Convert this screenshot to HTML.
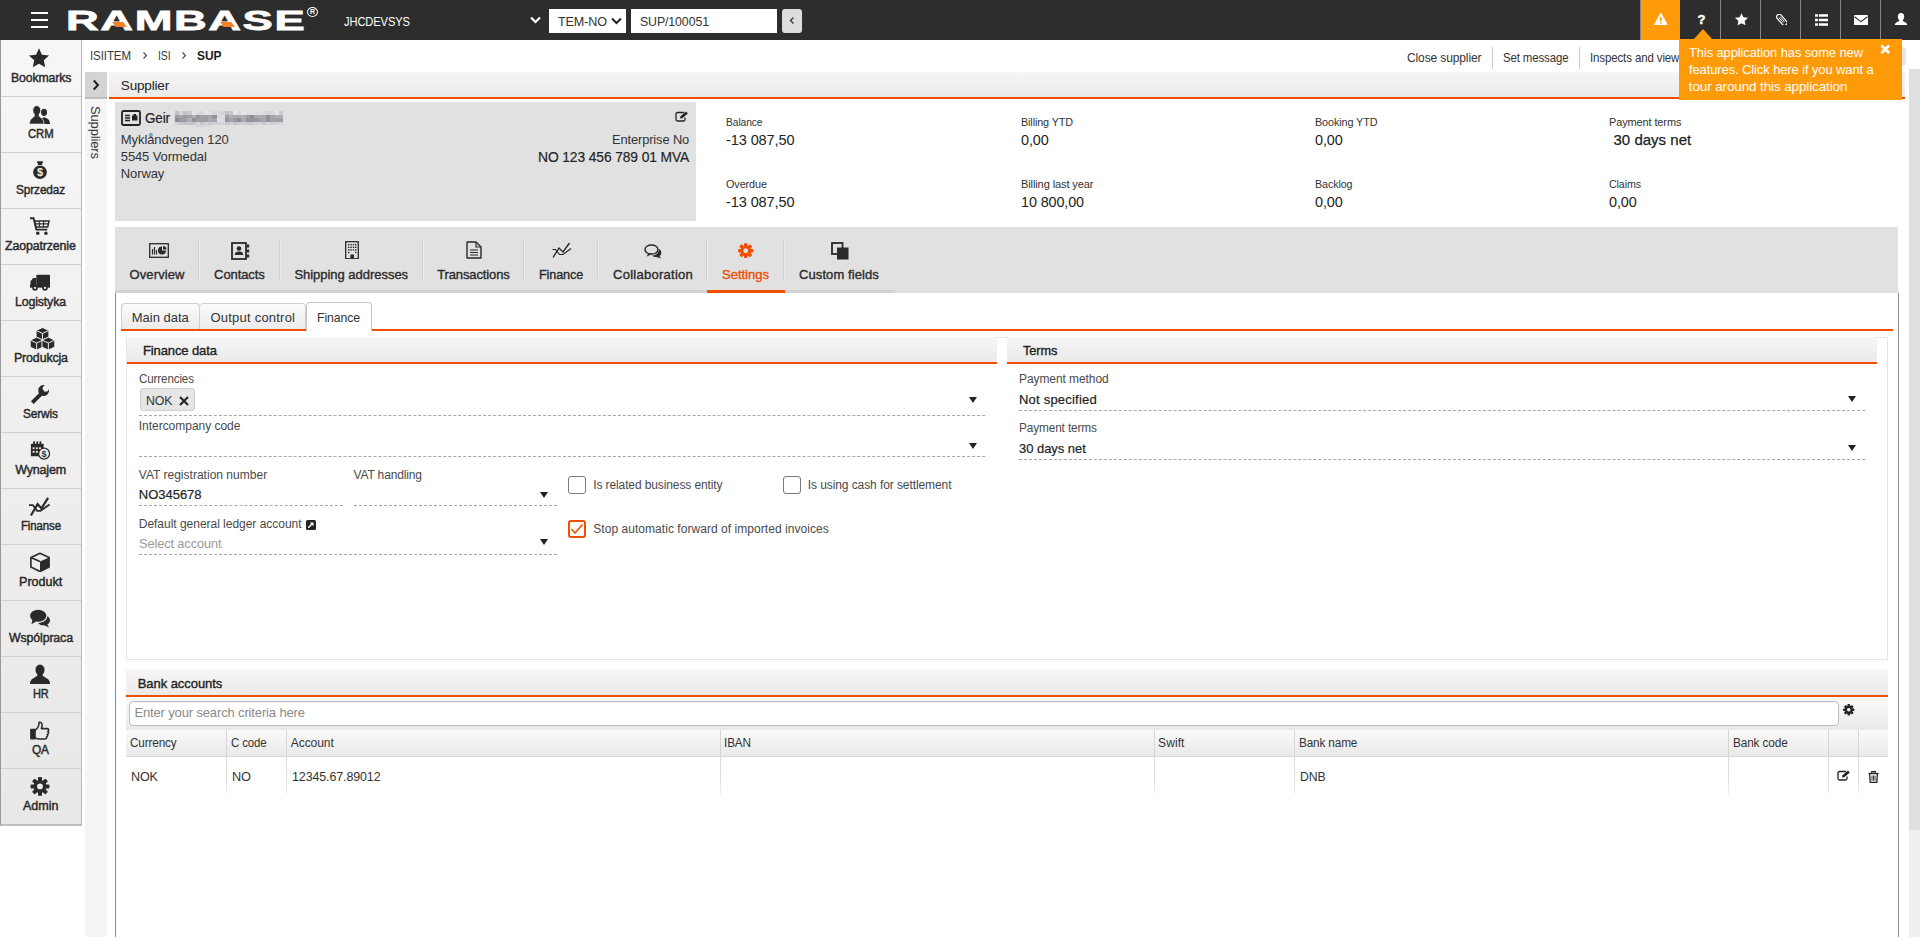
<!DOCTYPE html>
<html><head><meta charset="utf-8"><title>RamBase - Supplier</title>
<style>
*{box-sizing:border-box;margin:0;padding:0}
html,body{width:1920px;height:937px;overflow:hidden;background:#fff}
body{font-family:"Liberation Sans",sans-serif;font-size:13px;color:#222;position:relative}
.abs{position:absolute}
.t{position:absolute;white-space:nowrap;line-height:1}
#top{left:0;top:0;width:1920px;height:40px;background:#2d2d2d}
#side{left:0;top:40px;width:82px;height:786px;background:linear-gradient(#f7f6f6,#e9e8e6);border-left:1px solid #999;border-right:1px solid #b8b8b8;border-bottom:2px solid #bdbdbd}
.hdr{background:linear-gradient(#f7f5f6,#ebeae9);border-bottom:2px solid #f04e00}
.dash{position:absolute;height:0;border-top:1px dashed #a8a8a8}
</style></head><body>
<div class="t" id="t1" style="left:90.17px;top:48.57px;font-size:13.5px;letter-spacing:-0.120px;transform-origin:0 0;transform:scaleX(0.8536);color:#3a3a3a;">ISIITEM</div>
<svg class="abs" style="left:142px;top:51px" width="6" height="9" viewBox="0 0 6 9"><path d="M1.5 1.5 L4.5 4.5 L1.5 7.5" fill="none" stroke="#444" stroke-width="1.1"/></svg>
<div class="t" id="t2" style="left:157.81px;top:48.57px;font-size:13.5px;letter-spacing:-0.120px;transform-origin:0 0;transform:scaleX(0.7746);color:#3a3a3a;">ISI</div>
<svg class="abs" style="left:181px;top:51px" width="6" height="9" viewBox="0 0 6 9"><path d="M1.5 1.5 L4.5 4.5 L1.5 7.5" fill="none" stroke="#444" stroke-width="1.1"/></svg>
<div class="t" id="t3" style="left:196.56px;top:48.57px;font-size:13.5px;letter-spacing:-0.120px;transform-origin:0 0;transform:scaleX(0.8866);font-weight:bold;color:#1a1a1a;">SUP</div>
<div class="t" id="t4" style="left:1407.24px;top:50.90px;font-size:13px;letter-spacing:-0.120px;transform-origin:0 0;transform:scaleX(0.9218);color:#333;">Close supplier</div>
<div class="abs" style="left:1492px;top:47px;width:1px;height:22px;background:#ccc"></div>
<div class="t" id="t5" style="left:1502.96px;top:50.90px;font-size:13px;letter-spacing:-0.120px;transform-origin:0 0;transform:scaleX(0.8771);color:#333;">Set message</div>
<div class="abs" style="left:1579px;top:47px;width:1px;height:22px;background:#ccc"></div>
<div class="t" id="t6" style="left:1590.26px;top:50.90px;font-size:13px;letter-spacing:-0.120px;transform-origin:0 0;transform:scaleX(0.8813);color:#333;">Inspects and views</div>
<div class="abs" style="left:1880px;top:47px;width:26px;height:19px;background:#e4e6e8;border-radius:4px"></div>
<div class="abs" style="left:85px;top:72px;width:22px;height:865px;background:#f5f5f5"></div>
<div class="abs" style="left:85px;top:72px;width:22px;height:27px;background:#d4d4d4;border-bottom:2px solid #bebebe"></div>
<svg class="abs" style="left:92px;top:79px" width="8" height="12" viewBox="0 0 8 12"><path d="M1.8 1.5 L6 6 L1.8 10.5" fill="none" stroke="#222" stroke-width="2"/></svg>
<div class="t" id="sup_v" style="left:101.5px;top:106px;font-size:13px;color:#333;transform-origin:0 0;transform:rotate(90deg);letter-spacing:-0.15px">Suppliers</div>
<div class="abs hdr" style="left:109px;top:72px;width:1796px;height:27px;"></div>
<div class="t" id="t7" style="left:120.80px;top:78.57px;font-size:13.5px;letter-spacing:-0.162px;">Supplier</div>
<div class="abs" style="left:115px;top:102px;width:581px;height:119px;background:#e1e1e1"></div>
<svg class="abs" style="left:121px;top:110px" width="20" height="16" viewBox="0 0 20 16"><rect x="1" y="1" width="18" height="14" rx="1.5" fill="none" stroke="#222" stroke-width="1.8"/><path d="M4 5.5 L9 5.5 M4 8 L9 8 M4 10.5 L9 10.5" stroke="#222" stroke-width="1.4"/><rect x="11" y="5.5" width="5.5" height="5" fill="#222"/><rect x="12.5" y="4" width="2.5" height="2" fill="#222"/></svg>
<div class="t" id="t8" style="left:144.94px;top:110.53px;font-size:14.5px;letter-spacing:-0.120px;transform-origin:0 0;transform:scaleX(0.9248);-webkit-text-stroke:0.2px #222;">Geir</div>
<div class="abs" style="left:175px;top:111.2px;width:4.25px;height:3.7px;background:#c0c1c6"></div>
<div class="abs" style="left:175px;top:114.8px;width:4.25px;height:3.7px;background:#a0a1a6"></div>
<div class="abs" style="left:175px;top:118.4px;width:4.25px;height:3.5px;background:#8b8c91"></div>
<div class="abs" style="left:175px;top:121.8px;width:4.25px;height:3.3px;background:#d4d5da"></div>
<div class="abs" style="left:179.15px;top:111.2px;width:4.25px;height:3.7px;background:#d5d6db"></div>
<div class="abs" style="left:179.15px;top:114.8px;width:4.25px;height:3.7px;background:#a7a8ad"></div>
<div class="abs" style="left:179.15px;top:118.4px;width:4.25px;height:3.5px;background:#9a9ba0"></div>
<div class="abs" style="left:179.15px;top:121.8px;width:4.25px;height:3.3px;background:#c5c6cb"></div>
<div class="abs" style="left:183.3px;top:111.2px;width:4.25px;height:3.7px;background:#c3c4c9"></div>
<div class="abs" style="left:183.3px;top:114.8px;width:4.25px;height:3.7px;background:#97989d"></div>
<div class="abs" style="left:183.3px;top:118.4px;width:4.25px;height:3.5px;background:#9e9fa4"></div>
<div class="abs" style="left:183.3px;top:121.8px;width:4.25px;height:3.3px;background:#c4c5ca"></div>
<div class="abs" style="left:187.45px;top:111.2px;width:4.25px;height:3.7px;background:#c8c9ce"></div>
<div class="abs" style="left:187.45px;top:114.8px;width:4.25px;height:3.7px;background:#9fa0a5"></div>
<div class="abs" style="left:187.45px;top:118.4px;width:4.25px;height:3.5px;background:#b0b1b6"></div>
<div class="abs" style="left:187.45px;top:121.8px;width:4.25px;height:3.3px;background:#c4c5ca"></div>
<div class="abs" style="left:191.6px;top:111.2px;width:4.25px;height:3.7px;background:#e4e5e8"></div>
<div class="abs" style="left:191.6px;top:114.8px;width:4.25px;height:3.7px;background:#aeafb4"></div>
<div class="abs" style="left:191.6px;top:118.4px;width:4.25px;height:3.5px;background:#919297"></div>
<div class="abs" style="left:191.6px;top:121.8px;width:4.25px;height:3.3px;background:#c7c8cd"></div>
<div class="abs" style="left:195.75px;top:111.2px;width:4.25px;height:3.7px;background:#dbdce1"></div>
<div class="abs" style="left:195.75px;top:114.8px;width:4.25px;height:3.7px;background:#97989d"></div>
<div class="abs" style="left:195.75px;top:118.4px;width:4.25px;height:3.5px;background:#9fa0a5"></div>
<div class="abs" style="left:195.75px;top:121.8px;width:4.25px;height:3.3px;background:#d4d5da"></div>
<div class="abs" style="left:195.75px;top:125px;width:4.25px;height:2px;background:#d6d6d9"></div>
<div class="abs" style="left:199.9px;top:111.2px;width:4.25px;height:3.7px;background:#d7d8dd"></div>
<div class="abs" style="left:199.9px;top:114.8px;width:4.25px;height:3.7px;background:#9fa0a5"></div>
<div class="abs" style="left:199.9px;top:118.4px;width:4.25px;height:3.5px;background:#9e9fa4"></div>
<div class="abs" style="left:199.9px;top:121.8px;width:4.25px;height:3.3px;background:#c6c7cc"></div>
<div class="abs" style="left:199.9px;top:125px;width:4.25px;height:2px;background:#d6d6d9"></div>
<div class="abs" style="left:204.05px;top:111.2px;width:4.25px;height:3.7px;background:#e3e4e8"></div>
<div class="abs" style="left:204.05px;top:114.8px;width:4.25px;height:3.7px;background:#9e9fa4"></div>
<div class="abs" style="left:204.05px;top:118.4px;width:4.25px;height:3.5px;background:#9d9ea3"></div>
<div class="abs" style="left:204.05px;top:121.8px;width:4.25px;height:3.3px;background:#d4d5da"></div>
<div class="abs" style="left:204.05px;top:125px;width:4.25px;height:2px;background:#d6d6d9"></div>
<div class="abs" style="left:208.2px;top:111.2px;width:4.25px;height:3.7px;background:#dfe0e5"></div>
<div class="abs" style="left:208.2px;top:114.8px;width:4.25px;height:3.7px;background:#a6a7ac"></div>
<div class="abs" style="left:208.2px;top:118.4px;width:4.25px;height:3.5px;background:#aaabb0"></div>
<div class="abs" style="left:208.2px;top:121.8px;width:4.25px;height:3.3px;background:#cacbd0"></div>
<div class="abs" style="left:208.2px;top:125px;width:4.25px;height:2px;background:#d6d6d9"></div>
<div class="abs" style="left:212.35px;top:111.2px;width:4.25px;height:3.7px;background:#d7d8dd"></div>
<div class="abs" style="left:212.35px;top:114.8px;width:4.25px;height:3.7px;background:#919297"></div>
<div class="abs" style="left:212.35px;top:118.4px;width:4.25px;height:3.5px;background:#a5a6ab"></div>
<div class="abs" style="left:212.35px;top:121.8px;width:4.25px;height:3.3px;background:#cdced3"></div>
<div class="abs" style="left:216.5px;top:111.2px;width:4.25px;height:3.7px;background:#dcdde2"></div>
<div class="abs" style="left:216.5px;top:114.8px;width:4.25px;height:3.7px;background:#d7d8dd"></div>
<div class="abs" style="left:216.5px;top:118.4px;width:4.25px;height:3.5px;background:#e1e2e7"></div>
<div class="abs" style="left:216.5px;top:121.8px;width:4.25px;height:3.3px;background:#d0d1d6"></div>
<div class="abs" style="left:220.65px;top:111.2px;width:4.25px;height:3.7px;background:#d1d2d7"></div>
<div class="abs" style="left:220.65px;top:114.8px;width:4.25px;height:3.7px;background:#dedfe4"></div>
<div class="abs" style="left:220.65px;top:118.4px;width:4.25px;height:3.5px;background:#dbdce1"></div>
<div class="abs" style="left:220.65px;top:121.8px;width:4.25px;height:3.3px;background:#d3d4d9"></div>
<div class="abs" style="left:224.8px;top:111.2px;width:4.25px;height:3.7px;background:#c0c1c6"></div>
<div class="abs" style="left:224.8px;top:114.8px;width:4.25px;height:3.7px;background:#a0a1a6"></div>
<div class="abs" style="left:224.8px;top:118.4px;width:4.25px;height:3.5px;background:#97989d"></div>
<div class="abs" style="left:224.8px;top:121.8px;width:4.25px;height:3.3px;background:#c5c6cb"></div>
<div class="abs" style="left:228.95px;top:111.2px;width:4.25px;height:3.7px;background:#c7c8cd"></div>
<div class="abs" style="left:228.95px;top:114.8px;width:4.25px;height:3.7px;background:#aeafb4"></div>
<div class="abs" style="left:228.95px;top:118.4px;width:4.25px;height:3.5px;background:#a6a7ac"></div>
<div class="abs" style="left:228.95px;top:121.8px;width:4.25px;height:3.3px;background:#cecfd4"></div>
<div class="abs" style="left:233.1px;top:111.2px;width:4.25px;height:3.7px;background:#e4e5e8"></div>
<div class="abs" style="left:233.1px;top:114.8px;width:4.25px;height:3.7px;background:#abacb1"></div>
<div class="abs" style="left:233.1px;top:118.4px;width:4.25px;height:3.5px;background:#98999e"></div>
<div class="abs" style="left:233.1px;top:121.8px;width:4.25px;height:3.3px;background:#c5c6cb"></div>
<div class="abs" style="left:237.25px;top:111.2px;width:4.25px;height:3.7px;background:#dadbe0"></div>
<div class="abs" style="left:237.25px;top:114.8px;width:4.25px;height:3.7px;background:#abacb1"></div>
<div class="abs" style="left:237.25px;top:118.4px;width:4.25px;height:3.5px;background:#8c8d92"></div>
<div class="abs" style="left:237.25px;top:121.8px;width:4.25px;height:3.3px;background:#cccdd2"></div>
<div class="abs" style="left:241.4px;top:111.2px;width:4.25px;height:3.7px;background:#e4e5e8"></div>
<div class="abs" style="left:241.4px;top:114.8px;width:4.25px;height:3.7px;background:#aeafb4"></div>
<div class="abs" style="left:241.4px;top:118.4px;width:4.25px;height:3.5px;background:#aaabb0"></div>
<div class="abs" style="left:241.4px;top:121.8px;width:4.25px;height:3.3px;background:#cfd0d5"></div>
<div class="abs" style="left:245.55px;top:111.2px;width:4.25px;height:3.7px;background:#dddee3"></div>
<div class="abs" style="left:245.55px;top:114.8px;width:4.25px;height:3.7px;background:#9c9da2"></div>
<div class="abs" style="left:245.55px;top:118.4px;width:4.25px;height:3.5px;background:#95969b"></div>
<div class="abs" style="left:245.55px;top:121.8px;width:4.25px;height:3.3px;background:#c6c7cc"></div>
<div class="abs" style="left:249.7px;top:111.2px;width:4.25px;height:3.7px;background:#e1e2e7"></div>
<div class="abs" style="left:249.7px;top:114.8px;width:4.25px;height:3.7px;background:#8b8c91"></div>
<div class="abs" style="left:249.7px;top:118.4px;width:4.25px;height:3.5px;background:#939499"></div>
<div class="abs" style="left:249.7px;top:121.8px;width:4.25px;height:3.3px;background:#cacbd0"></div>
<div class="abs" style="left:253.85px;top:111.2px;width:4.25px;height:3.7px;background:#dedfe4"></div>
<div class="abs" style="left:253.85px;top:114.8px;width:4.25px;height:3.7px;background:#a8a9ae"></div>
<div class="abs" style="left:253.85px;top:118.4px;width:4.25px;height:3.5px;background:#999a9f"></div>
<div class="abs" style="left:253.85px;top:121.8px;width:4.25px;height:3.3px;background:#d1d2d7"></div>
<div class="abs" style="left:258px;top:111.2px;width:4.25px;height:3.7px;background:#dedfe4"></div>
<div class="abs" style="left:258px;top:114.8px;width:4.25px;height:3.7px;background:#adaeb3"></div>
<div class="abs" style="left:258px;top:118.4px;width:4.25px;height:3.5px;background:#a0a1a6"></div>
<div class="abs" style="left:258px;top:121.8px;width:4.25px;height:3.3px;background:#d4d5da"></div>
<div class="abs" style="left:262.15px;top:111.2px;width:4.25px;height:3.7px;background:#dadbe0"></div>
<div class="abs" style="left:262.15px;top:114.8px;width:4.25px;height:3.7px;background:#a9aaaf"></div>
<div class="abs" style="left:262.15px;top:118.4px;width:4.25px;height:3.5px;background:#a8a9ae"></div>
<div class="abs" style="left:262.15px;top:121.8px;width:4.25px;height:3.3px;background:#c7c8cd"></div>
<div class="abs" style="left:266.3px;top:111.2px;width:4.25px;height:3.7px;background:#d4d5da"></div>
<div class="abs" style="left:266.3px;top:114.8px;width:4.25px;height:3.7px;background:#8f9095"></div>
<div class="abs" style="left:266.3px;top:118.4px;width:4.25px;height:3.5px;background:#919297"></div>
<div class="abs" style="left:266.3px;top:121.8px;width:4.25px;height:3.3px;background:#d5d6db"></div>
<div class="abs" style="left:270.45px;top:111.2px;width:4.25px;height:3.7px;background:#d7d8dd"></div>
<div class="abs" style="left:270.45px;top:114.8px;width:4.25px;height:3.7px;background:#a4a5aa"></div>
<div class="abs" style="left:270.45px;top:118.4px;width:4.25px;height:3.5px;background:#a0a1a6"></div>
<div class="abs" style="left:270.45px;top:121.8px;width:4.25px;height:3.3px;background:#cecfd4"></div>
<div class="abs" style="left:274.6px;top:111.2px;width:4.25px;height:3.7px;background:#e4e5e8"></div>
<div class="abs" style="left:274.6px;top:114.8px;width:4.25px;height:3.7px;background:#aeafb4"></div>
<div class="abs" style="left:274.6px;top:118.4px;width:4.25px;height:3.5px;background:#a0a1a6"></div>
<div class="abs" style="left:274.6px;top:121.8px;width:4.25px;height:3.3px;background:#d3d4d9"></div>
<div class="abs" style="left:278.75px;top:111.2px;width:4.25px;height:3.7px;background:#c9cacf"></div>
<div class="abs" style="left:278.75px;top:114.8px;width:4.25px;height:3.7px;background:#b0b1b6"></div>
<div class="abs" style="left:278.75px;top:118.4px;width:4.25px;height:3.5px;background:#9d9ea3"></div>
<div class="abs" style="left:278.75px;top:121.8px;width:4.25px;height:3.3px;background:#d4d5da"></div>
<span class="t" style="left:175px;top:108px;font-size:13px;color:transparent">supplier name</span>
<div class="t" id="t9" style="left:120.80px;top:133.20px;font-size:13px;letter-spacing:-0.075px;color:#333;">Myklåndvegen 120</div>
<div class="t" id="t10" style="left:120.80px;top:149.90px;font-size:13px;letter-spacing:-0.121px;color:#333;">5545 Vormedal</div>
<div class="t" id="t11" style="left:120.80px;top:166.60px;font-size:13px;letter-spacing:-0.113px;color:#333;">Norway</div>
<svg class="abs" style="left:674.5px;top:111px" width="14" height="11" viewBox="0 0 14 11"><path d="M9 1.5 L2.5 1.5 A1.5 1.5 0 0 0 1 3 L1 8.5 A1.5 1.5 0 0 0 2.5 10 L8.5 10 A1.5 1.5 0 0 0 10 8.5 L10 6.5" fill="none" stroke="#222" stroke-width="1.3"/><path d="M5 7.5 L5.5 5.2 L11 0.6 L12.8 2.6 L7.3 7.2 Z" fill="#222"/></svg>
<div class="t" id="t12" style="left:612.31px;top:133.20px;font-size:13px;letter-spacing:-0.120px;transform-origin:0 0;transform:scaleX(0.9892);color:#333;">Enterprise No</div>
<div class="t" id="t13" style="left:538.21px;top:149.85px;font-size:14px;letter-spacing:-0.120px;transform-origin:0 0;transform:scaleX(0.9889);-webkit-text-stroke:0.15px #222;">NO 123 456 789 01 MVA</div>
<div class="t" id="t14" style="left:726.25px;top:116.57px;font-size:11.5px;letter-spacing:-0.120px;transform-origin:0 0;transform:scaleX(0.8962);color:#333;">Balance</div>
<div class="t" id="t15" style="left:726.21px;top:131.60px;font-size:15px;letter-spacing:-0.120px;transform-origin:0 0;transform:scaleX(0.9710);">-13 087,50</div>
<div class="t" id="t16" style="left:726.23px;top:179.27px;font-size:11.5px;letter-spacing:-0.120px;transform-origin:0 0;transform:scaleX(0.9449);color:#333;">Overdue</div>
<div class="t" id="t17" style="left:726.21px;top:194.10px;font-size:15px;letter-spacing:-0.120px;transform-origin:0 0;transform:scaleX(0.9710);">-13 087,50</div>
<div class="t" id="t18" style="left:1020.78px;top:116.57px;font-size:11.5px;letter-spacing:-0.120px;transform-origin:0 0;transform:scaleX(0.9374);color:#333;">Billing YTD</div>
<div class="t" id="t19" style="left:1020.77px;top:131.60px;font-size:15px;letter-spacing:-0.120px;transform-origin:0 0;transform:scaleX(0.9606);">0,00</div>
<div class="t" id="t20" style="left:1020.77px;top:179.27px;font-size:11.5px;letter-spacing:-0.120px;transform-origin:0 0;transform:scaleX(0.9613);color:#333;">Billing last year</div>
<div class="t" id="t21" style="left:1020.77px;top:194.10px;font-size:15px;letter-spacing:-0.120px;transform-origin:0 0;transform:scaleX(0.9578);">10 800,00</div>
<div class="t" id="t22" style="left:1315.13px;top:116.57px;font-size:11.5px;letter-spacing:-0.120px;transform-origin:0 0;transform:scaleX(0.9420);color:#333;">Booking YTD</div>
<div class="t" id="t23" style="left:1315.12px;top:131.60px;font-size:15px;letter-spacing:-0.120px;transform-origin:0 0;transform:scaleX(0.9606);">0,00</div>
<div class="t" id="t24" style="left:1315.13px;top:179.27px;font-size:11.5px;letter-spacing:-0.120px;transform-origin:0 0;transform:scaleX(0.9330);color:#333;">Backlog</div>
<div class="t" id="t25" style="left:1315.12px;top:194.10px;font-size:15px;letter-spacing:-0.120px;transform-origin:0 0;transform:scaleX(0.9606);">0,00</div>
<div class="t" id="t26" style="left:1609.02px;top:116.57px;font-size:11.5px;letter-spacing:-0.120px;transform-origin:0 0;transform:scaleX(0.9540);color:#333;">Payment terms</div>
<div class="t" id="t27" style="left:1613.50px;top:131.60px;font-size:15px;letter-spacing:0.014px;-webkit-text-stroke:0.25px #222;">30 days net</div>
<div class="t" id="t28" style="left:1609.04px;top:179.27px;font-size:11.5px;letter-spacing:-0.120px;transform-origin:0 0;transform:scaleX(0.9264);color:#333;">Claims</div>
<div class="t" id="t29" style="left:1609.02px;top:194.10px;font-size:15px;letter-spacing:-0.120px;transform-origin:0 0;transform:scaleX(0.9606);">0,00</div>
<div class="abs" style="left:115px;top:227px;width:1783px;height:66px;background:#e1e1e1"></div>
<div class="abs" style="left:115px;top:290px;width:780px;height:3px;background:#d2d2d2"></div>
<div class="abs" style="left:707px;top:290px;width:78px;height:3px;background:#f04e00"></div>
<div class="abs" style="left:198px;top:239px;width:1px;height:40px;background:#d0d0d0"></div>
<div class="abs" style="left:199px;top:239px;width:1px;height:40px;background:#ececec"></div>
<div class="abs" style="left:279px;top:239px;width:1px;height:40px;background:#d0d0d0"></div>
<div class="abs" style="left:280px;top:239px;width:1px;height:40px;background:#ececec"></div>
<div class="abs" style="left:422px;top:239px;width:1px;height:40px;background:#d0d0d0"></div>
<div class="abs" style="left:423px;top:239px;width:1px;height:40px;background:#ececec"></div>
<div class="abs" style="left:523px;top:239px;width:1px;height:40px;background:#d0d0d0"></div>
<div class="abs" style="left:524px;top:239px;width:1px;height:40px;background:#ececec"></div>
<div class="abs" style="left:597px;top:239px;width:1px;height:40px;background:#d0d0d0"></div>
<div class="abs" style="left:598px;top:239px;width:1px;height:40px;background:#ececec"></div>
<div class="abs" style="left:706px;top:239px;width:1px;height:40px;background:#d0d0d0"></div>
<div class="abs" style="left:707px;top:239px;width:1px;height:40px;background:#ececec"></div>
<div class="abs" style="left:783px;top:239px;width:1px;height:40px;background:#d0d0d0"></div>
<div class="abs" style="left:784px;top:239px;width:1px;height:40px;background:#ececec"></div>
<div class="t" id="t30" style="left:129.50px;top:267.60px;font-size:13px;letter-spacing:0.117px;-webkit-text-stroke:0.35px #2a2a2a;color:#2a2a2a;">Overview</div>
<div class="t" id="t31" style="left:214.10px;top:267.60px;font-size:13px;letter-spacing:-0.086px;-webkit-text-stroke:0.35px #2a2a2a;color:#2a2a2a;">Contacts</div>
<div class="t" id="t32" style="left:294.40px;top:267.60px;font-size:13px;letter-spacing:-0.029px;-webkit-text-stroke:0.35px #2a2a2a;color:#2a2a2a;">Shipping addresses</div>
<div class="t" id="t33" style="left:437.20px;top:267.60px;font-size:13px;letter-spacing:-0.122px;-webkit-text-stroke:0.35px #2a2a2a;color:#2a2a2a;">Transactions</div>
<div class="t" id="t34" style="left:539.21px;top:267.60px;font-size:13px;letter-spacing:-0.120px;transform-origin:0 0;transform:scaleX(0.9708);-webkit-text-stroke:0.35px #2a2a2a;color:#2a2a2a;">Finance</div>
<div class="t" id="t35" style="left:613.10px;top:267.60px;font-size:13px;letter-spacing:0.258px;-webkit-text-stroke:0.35px #2a2a2a;color:#2a2a2a;">Collaboration</div>
<div class="t" id="t36" style="left:722.10px;top:267.60px;font-size:13px;letter-spacing:-0.025px;-webkit-text-stroke:0.35px #f04e00;color:#f04e00;">Settings</div>
<div class="t" id="t37" style="left:799.10px;top:267.60px;font-size:13px;letter-spacing:0.071px;-webkit-text-stroke:0.35px #2a2a2a;color:#2a2a2a;">Custom fields</div>
<svg class="abs" style="left:149px;top:243px" width="20" height="15" viewBox="0 0 20 15"><rect x="0.7" y="0.7" width="18.6" height="13.6" fill="none" stroke="#2a2a2a" stroke-width="1.3"/><path d="M3.5 11.5 L3.5 6 M5.5 11.5 L5.5 4 M7.5 11.5 L7.5 7" stroke="#2a2a2a" stroke-width="1.2"/><path d="M13 7.5 L13 3.5 A4 4 0 1 0 17 7.5 Z" fill="#2a2a2a"/><path d="M14 6.5 L14 3 A3.5 3.5 0 0 1 17.5 6.5 Z" fill="#2a2a2a"/></svg>
<svg class="abs" style="left:231px;top:242px" width="19" height="18" viewBox="0 0 19 18"><rect x="1" y="1" width="14" height="16" fill="none" stroke="#2a2a2a" stroke-width="1.8"/><circle cx="8" cy="6.5" r="2.3" fill="#2a2a2a"/><path d="M3.8 13 C3.8 10 6 9.5 8 9.5 C10 9.5 12.2 10 12.2 13 Z" fill="#2a2a2a"/><rect x="16" y="2.5" width="2.2" height="3" fill="#2a2a2a"/><rect x="16" y="7.5" width="2.2" height="3" fill="#2a2a2a"/><rect x="16" y="12.5" width="2.2" height="3" fill="#2a2a2a"/></svg>
<svg class="abs" style="left:344.5px;top:240.5px" width="14" height="18.5" viewBox="0 0 14 18.5"><rect x="0.7" y="0.7" width="12.6" height="17.1" fill="none" stroke="#2a2a2a" stroke-width="1.3"/><g fill="#2a2a2a"><rect x="3" y="3" width="1.4" height="1.4"/><rect x="5.4" y="3" width="1.4" height="1.4"/><rect x="7.8" y="3" width="1.4" height="1.4"/><rect x="10" y="3" width="1.4" height="1.4"/><rect x="3" y="5.6" width="1.4" height="1.4"/><rect x="5.4" y="5.6" width="1.4" height="1.4"/><rect x="7.8" y="5.6" width="1.4" height="1.4"/><rect x="10" y="5.6" width="1.4" height="1.4"/><rect x="3" y="8.2" width="1.4" height="1.4"/><rect x="5.4" y="8.2" width="1.4" height="1.4"/><rect x="7.8" y="8.2" width="1.4" height="1.4"/><rect x="10" y="8.2" width="1.4" height="1.4"/><rect x="3" y="10.8" width="1.4" height="1.4"/><rect x="10" y="10.8" width="1.4" height="1.4"/><rect x="5.4" y="13.5" width="3.6" height="4.3"/></g></svg>
<svg class="abs" style="left:466px;top:241px" width="16" height="18" viewBox="0 0 16 18"><path d="M1 1 L10 1 L15 6 L15 17 L1 17 Z" fill="none" stroke="#2a2a2a" stroke-width="1.4" stroke-linejoin="round"/><path d="M10 1 L10 6 L15 6" fill="none" stroke="#2a2a2a" stroke-width="1.2"/><path d="M4 9 L12 9 M4 11.5 L12 11.5 M4 14 L12 14" stroke="#2a2a2a" stroke-width="1.1"/></svg>
<svg class="abs" style="left:552px;top:242px" width="20" height="16" viewBox="0 0 20 16"><g fill="none" stroke="#2a2a2a"><path d="M1 15.5 L7 6 L11 10 L17.5 1" stroke-width="1.4"/><path d="M0.5 7.5 L3.5 7.5 L7.5 12.5 L11 12.5 L19 6.5" stroke-width="1.2"/></g></svg>
<svg class="abs" style="left:644px;top:244px" width="18" height="15" viewBox="0 0 18 15"><ellipse cx="7.5" cy="5.5" rx="6.5" ry="4.6" fill="none" stroke="#2a2a2a" stroke-width="1.5"/><path d="M4 9 L3 12.5 L8 10" fill="#2a2a2a"/><path d="M15 5 C18 6.5 18 10.5 15.5 12 L17 14.5 L12.5 13 C10.5 13.3 9 12.5 8 11.5 C12 11.5 15 9 15 5 Z" fill="#2a2a2a"/></svg>
<svg class="abs" style="left:738px;top:242.5px" width="15.5" height="15.5" viewBox="-10.5 -10.5 21 21"><g fill="#f04e00"><circle r="7.2"/><rect x="-2.3" y="-10.3" width="4.6" height="20.6" rx="0.8"/><rect x="-2.3" y="-10.3" width="4.6" height="20.6" rx="0.8" transform="rotate(45)"/><rect x="-2.3" y="-10.3" width="4.6" height="20.6" rx="0.8" transform="rotate(90)"/><rect x="-2.3" y="-10.3" width="4.6" height="20.6" rx="0.8" transform="rotate(135)"/></g><circle r="3.3" fill="#e1e1e1"/></svg>
<svg class="abs" style="left:830.5px;top:242px" width="18" height="18" viewBox="0 0 18 18"><rect x="1" y="1" width="10.5" height="11" fill="none" stroke="#2a2a2a" stroke-width="1.8"/><rect x="6" y="5.5" width="11.5" height="12" fill="#2a2a2a"/></svg>
<div class="abs" style="left:115px;top:293px;width:1784px;height:644px;background:#fff;border-left:1px solid #8a8a8a;border-right:1px solid #8e8e8e"></div>
<div class="abs" style="left:121px;top:329px;width:1772px;height:2px;background:#f04e00"></div>
<div class="abs" style="left:121px;top:303px;width:79px;height:26px;background:linear-gradient(#fbfbfb,#ebebeb);border:1px solid #cfcfcf;border-bottom:none;border-radius:4px 4px 0 0"></div>
<div class="abs" style="left:200px;top:303px;width:106px;height:26px;background:linear-gradient(#fbfbfb,#ebebeb);border:1px solid #cfcfcf;border-bottom:none;border-left:none;border-radius:4px 4px 0 0"></div>
<div class="abs" style="left:306px;top:302px;width:66px;height:29px;background:#fff;border:1px solid #c4c4c4;border-bottom:none;border-radius:4px 4px 0 0"></div>
<div class="t" id="t38" style="left:131.80px;top:311.40px;font-size:13px;letter-spacing:-0.012px;color:#333;">Main data</div>
<div class="t" id="t39" style="left:210.50px;top:311.40px;font-size:13px;letter-spacing:0.219px;color:#333;">Output control</div>
<div class="t" id="t40" style="left:316.93px;top:311.40px;font-size:13px;letter-spacing:-0.120px;transform-origin:0 0;transform:scaleX(0.9444);color:#333;">Finance</div>
<div class="abs" style="left:126px;top:336.5px;width:1762px;height:323px;border:1px solid #e6e6e6"></div>
<div class="abs hdr" style="left:127px;top:337px;width:870px;height:27px;"></div>
<div class="abs hdr" style="left:1007px;top:337px;width:870px;height:27px;"></div>
<div class="t" id="t41" style="left:142.90px;top:343.70px;font-size:13px;letter-spacing:-0.106px;-webkit-text-stroke:0.35px #222;">Finance data</div>
<div class="t" id="t42" style="left:1023.01px;top:343.70px;font-size:13px;letter-spacing:-0.120px;transform-origin:0 0;transform:scaleX(0.9825);-webkit-text-stroke:0.35px #222;">Terms</div>
<div class="t" id="t43" style="left:138.77px;top:372.84px;font-size:12px;letter-spacing:-0.120px;transform-origin:0 0;transform:scaleX(0.9659);color:#4a4a4a;">Currencies</div>
<div class="abs" style="left:140px;top:387.5px;width:55px;height:23px;background:#e6e6e6;border:1px solid #cdcdcd;border-radius:3px"></div>
<div class="t" id="t44" style="left:146.23px;top:393.80px;font-size:13px;letter-spacing:-0.120px;transform-origin:0 0;transform:scaleX(0.9488);color:#333;">NOK</div>
<svg class="abs" style="left:178.5px;top:395.5px" width="10" height="10" viewBox="0 0 10 10"><path d="M1 1 L9 9 M9 1 L1 9" stroke="#222" stroke-width="2"/></svg>
<div class="dash" style="left:139px;top:415px;width:846px"></div>
<svg class="abs" style="left:968.5px;top:397px" width="8" height="6" viewBox="0 0 8 6"><path d="M0 0 L8 0 L4 6 Z" fill="#222"/></svg>
<div class="t" id="t45" style="left:138.75px;top:420.04px;font-size:12px;letter-spacing:-0.023px;color:#4a4a4a;">Intercompany code</div>
<div class="dash" style="left:139px;top:456px;width:846px"></div>
<svg class="abs" style="left:968.5px;top:443px" width="8" height="6" viewBox="0 0 8 6"><path d="M0 0 L8 0 L4 6 Z" fill="#222"/></svg>
<div class="t" id="t46" style="left:138.75px;top:469.09px;font-size:12px;letter-spacing:0.015px;color:#4a4a4a;">VAT registration number</div>
<div class="t" id="t47" style="left:138.75px;top:488.00px;font-size:13px;letter-spacing:-0.012px;-webkit-text-stroke:0.2px #222;">NO345678</div>
<div class="dash" style="left:139px;top:505px;width:203.5px"></div>
<div class="t" id="t48" style="left:353.50px;top:469.09px;font-size:12px;letter-spacing:-0.141px;color:#4a4a4a;">VAT handling</div>
<div class="dash" style="left:354px;top:505px;width:202.5px"></div>
<svg class="abs" style="left:539.5px;top:492px" width="8" height="6" viewBox="0 0 8 6"><path d="M0 0 L8 0 L4 6 Z" fill="#222"/></svg>
<div class="t" id="t49" style="left:138.75px;top:518.14px;font-size:12px;letter-spacing:-0.022px;color:#4a4a4a;">Default general ledger account</div>
<svg class="abs" style="left:306px;top:519.5px" width="10" height="10" viewBox="0 0 10 10"><rect x="0" y="0" width="10" height="10" rx="1.5" fill="#222"/><path d="M2.2 7.8 L6.5 3.5" stroke="#fff" stroke-width="1.5"/><path d="M3.8 2.5 L7.5 2.5 L7.5 6.2 Z" fill="#fff"/></svg>
<div class="t" id="t50" style="left:138.76px;top:536.50px;font-size:13px;letter-spacing:-0.120px;transform-origin:0 0;transform:scaleX(0.9855);color:#9a9a9a;">Select account</div>
<div class="dash" style="left:139px;top:554px;width:418px"></div>
<svg class="abs" style="left:540px;top:539.3px" width="8" height="6" viewBox="0 0 8 6"><path d="M0 0 L8 0 L4 6 Z" fill="#222"/></svg>
<div class="abs" style="left:568px;top:476.25px;width:17.5px;height:17.5px;border:1.5px solid #7a7a7a;border-radius:3px;background:#fff"></div>
<div class="t" id="t51" style="left:593.25px;top:478.59px;font-size:12px;letter-spacing:-0.113px;color:#4a4a4a;">Is related business entity</div>
<div class="abs" style="left:783px;top:476.25px;width:17.5px;height:17.5px;border:1.5px solid #7a7a7a;border-radius:3px;background:#fff"></div>
<div class="t" id="t52" style="left:807.75px;top:478.59px;font-size:12px;letter-spacing:-0.086px;color:#4a4a4a;">Is using cash for settlement</div>
<div class="abs" style="left:568px;top:520px;width:17.5px;height:17.5px;border:2px solid #f04e00;border-radius:3px;background:#fff"></div>
<svg class="abs" style="left:570px;top:523px" width="14" height="12" viewBox="0 0 14 12"><path d="M1.5 6 L5 10 L12.5 1.5" fill="none" stroke="#f04e00" stroke-width="1.6"/></svg>
<div class="t" id="t53" style="left:593.25px;top:522.84px;font-size:12px;letter-spacing:0.049px;color:#4a4a4a;">Stop automatic forward of imported invoices</div>
<div class="t" id="t54" style="left:1019.00px;top:372.84px;font-size:12px;letter-spacing:-0.078px;color:#4a4a4a;">Payment method</div>
<div class="t" id="t55" style="left:1019.00px;top:392.70px;font-size:13px;letter-spacing:0.212px;-webkit-text-stroke:0.2px #222;">Not specified</div>
<div class="dash" style="left:1019px;top:409.5px;width:846px"></div>
<svg class="abs" style="left:1848px;top:395.5px" width="8" height="6" viewBox="0 0 8 6"><path d="M0 0 L8 0 L4 6 Z" fill="#222"/></svg>
<div class="t" id="t56" style="left:1019.01px;top:421.54px;font-size:12px;letter-spacing:-0.120px;transform-origin:0 0;transform:scaleX(0.9842);color:#4a4a4a;">Payment terms</div>
<div class="t" id="t57" style="left:1019.00px;top:441.50px;font-size:13px;letter-spacing:-0.042px;-webkit-text-stroke:0.2px #222;">30 days net</div>
<div class="dash" style="left:1019px;top:458.5px;width:846px"></div>
<svg class="abs" style="left:1848px;top:444.5px" width="8" height="6" viewBox="0 0 8 6"><path d="M0 0 L8 0 L4 6 Z" fill="#222"/></svg>
<div class="abs hdr" style="left:126px;top:670px;width:1762px;height:27px;"></div>
<div class="t" id="t58" style="left:137.70px;top:676.60px;font-size:13px;letter-spacing:-0.056px;-webkit-text-stroke:0.35px #222;">Bank accounts</div>
<div class="abs" style="left:126px;top:697px;width:1762px;height:33px;background:linear-gradient(#fafafa,#e9e9e9)"></div>
<div class="abs" style="left:129px;top:700.5px;width:1709.5px;height:25.5px;background:#fff;border:1px solid #bdbdbd;border-radius:4px;box-shadow:inset 0 1px 1px rgba(0,0,0,0.06)"></div>
<div class="t" id="t59" style="left:134.40px;top:706.20px;font-size:13px;letter-spacing:-0.142px;color:#8a8a8a;">Enter your search criteria here</div>
<svg class="abs" style="left:1843px;top:704px" width="11.5" height="11.5" viewBox="-10.5 -10.5 21 21"><g fill="#222"><circle r="7.2"/><rect x="-2.3" y="-10.3" width="4.6" height="20.6" rx="0.8"/><rect x="-2.3" y="-10.3" width="4.6" height="20.6" rx="0.8" transform="rotate(45)"/><rect x="-2.3" y="-10.3" width="4.6" height="20.6" rx="0.8" transform="rotate(90)"/><rect x="-2.3" y="-10.3" width="4.6" height="20.6" rx="0.8" transform="rotate(135)"/></g><circle r="3.3" fill="#f2f2f2"/></svg>
<div class="abs" style="left:126px;top:730px;width:1762px;height:27px;background:linear-gradient(#fafafa,#e9e9e9);border-bottom:1px solid #d8d8d8"></div>
<div class="abs" style="left:225.5px;top:730px;width:1px;height:27px;background:#d6d6d6"></div>
<div class="abs" style="left:225.5px;top:757px;width:1px;height:38px;background:linear-gradient(#dcdcdc 60%,#f4f4f4)"></div>
<div class="abs" style="left:285.5px;top:730px;width:1px;height:27px;background:#d6d6d6"></div>
<div class="abs" style="left:285.5px;top:757px;width:1px;height:38px;background:linear-gradient(#dcdcdc 60%,#f4f4f4)"></div>
<div class="abs" style="left:719.5px;top:730px;width:1px;height:27px;background:#d6d6d6"></div>
<div class="abs" style="left:719.5px;top:757px;width:1px;height:38px;background:linear-gradient(#dcdcdc 60%,#f4f4f4)"></div>
<div class="abs" style="left:1153.5px;top:730px;width:1px;height:27px;background:#d6d6d6"></div>
<div class="abs" style="left:1153.5px;top:757px;width:1px;height:38px;background:linear-gradient(#dcdcdc 60%,#f4f4f4)"></div>
<div class="abs" style="left:1293.5px;top:730px;width:1px;height:27px;background:#d6d6d6"></div>
<div class="abs" style="left:1293.5px;top:757px;width:1px;height:38px;background:linear-gradient(#dcdcdc 60%,#f4f4f4)"></div>
<div class="abs" style="left:1727.5px;top:730px;width:1px;height:27px;background:#d6d6d6"></div>
<div class="abs" style="left:1727.5px;top:757px;width:1px;height:38px;background:linear-gradient(#dcdcdc 60%,#f4f4f4)"></div>
<div class="abs" style="left:1827.5px;top:730px;width:1px;height:27px;background:#d6d6d6"></div>
<div class="abs" style="left:1827.5px;top:757px;width:1px;height:38px;background:linear-gradient(#dcdcdc 60%,#f4f4f4)"></div>
<div class="abs" style="left:1857.5px;top:730px;width:1px;height:27px;background:#d6d6d6"></div>
<div class="abs" style="left:1857.5px;top:757px;width:1px;height:38px;background:linear-gradient(#dcdcdc 60%,#f4f4f4)"></div>
<div class="t" id="t60" style="left:129.81px;top:737.24px;font-size:12px;letter-spacing:-0.120px;transform-origin:0 0;transform:scaleX(0.9740);color:#333;">Currency</div>
<div class="t" id="t61" style="left:231.12px;top:737.24px;font-size:12px;letter-spacing:-0.120px;transform-origin:0 0;transform:scaleX(0.9513);color:#333;">C code</div>
<div class="t" id="t62" style="left:290.80px;top:737.24px;font-size:12px;letter-spacing:-0.060px;color:#333;">Account</div>
<div class="t" id="t63" style="left:724.31px;top:737.24px;font-size:12px;letter-spacing:-0.120px;transform-origin:0 0;transform:scaleX(0.9765);color:#333;">IBAN</div>
<div class="t" id="t64" style="left:1158.10px;top:737.24px;font-size:12px;letter-spacing:0.074px;color:#333;">Swift</div>
<div class="t" id="t65" style="left:1298.51px;top:737.24px;font-size:12px;letter-spacing:-0.120px;transform-origin:0 0;transform:scaleX(0.9758);color:#333;">Bank name</div>
<div class="t" id="t66" style="left:1732.81px;top:737.24px;font-size:12px;letter-spacing:-0.120px;transform-origin:0 0;transform:scaleX(0.9812);color:#333;">Bank code</div>
<div class="t" id="t67" style="left:130.92px;top:769.80px;font-size:13px;letter-spacing:-0.120px;transform-origin:0 0;transform:scaleX(0.9667);color:#333;">NOK</div>
<div class="t" id="t68" style="left:231.71px;top:769.80px;font-size:13px;letter-spacing:-0.120px;transform-origin:0 0;transform:scaleX(0.9804);color:#333;">NO</div>
<div class="t" id="t69" style="left:292.32px;top:769.80px;font-size:13px;letter-spacing:-0.120px;transform-origin:0 0;transform:scaleX(0.9586);color:#333;">12345.67.89012</div>
<div class="t" id="t70" style="left:1299.93px;top:769.80px;font-size:13px;letter-spacing:-0.120px;transform-origin:0 0;transform:scaleX(0.9409);color:#333;">DNB</div>
<svg class="abs" style="left:1836.5px;top:770px" width="14" height="11" viewBox="0 0 14 11"><path d="M9 1.5 L2.5 1.5 A1.5 1.5 0 0 0 1 3 L1 8.5 A1.5 1.5 0 0 0 2.5 10 L8.5 10 A1.5 1.5 0 0 0 10 8.5 L10 6.5" fill="none" stroke="#222" stroke-width="1.3"/><path d="M5 7.5 L5.5 5.2 L11 0.6 L12.8 2.6 L7.3 7.2 Z" fill="#222"/></svg>
<svg class="abs" style="left:1868px;top:770.5px" width="11" height="12" viewBox="0 0 11 12"><path d="M0.5 2.5 L10.5 2.5" stroke="#222" stroke-width="1.3"/><path d="M3.7 2.3 L3.7 0.7 L7.3 0.7 L7.3 2.3" fill="none" stroke="#222" stroke-width="1.2"/><path d="M1.6 3 L2.2 11.3 L8.8 11.3 L9.4 3" fill="none" stroke="#222" stroke-width="1.3"/><path d="M4 4.5 L4 9.7 M5.5 4.5 L5.5 9.7 M7 4.5 L7 9.7" stroke="#222" stroke-width="0.9"/></svg>
<div class="abs" style="left:1909px;top:69px;width:11px;height:868px;background:#efefef"></div>
<div class="abs" style="left:1909px;top:69px;width:11px;height:761px;background:#e0e0e0"></div>
<div id="side" class="abs"></div>
<div class="abs" style="left:1px;top:96px;width:80px;height:1px;background:#d0d0d0"></div>
<svg class="abs" style="left:28.3px;top:47px" width="22" height="21" viewBox="0 0 24 22"><path d="M12 1 L15.2 8 L23 8.8 L17.2 14 L18.8 21.6 L12 17.8 L5.2 21.6 L6.8 14 L1 8.8 L8.8 8 Z" fill="#2a2a2a"/></svg>
<div class="t" id="t71" style="left:10.56px;top:72.22px;font-size:12.5px;letter-spacing:-0.120px;transform-origin:0 0;transform:scaleX(0.9795);-webkit-text-stroke:0.45px #2a2a2a;color:#2a2a2a;">Bookmarks</div>
<div class="abs" style="left:1px;top:152px;width:80px;height:1px;background:#d0d0d0"></div>
<svg class="abs" style="left:28px;top:104.5px" width="23" height="20" viewBox="0 0 24 22"><g fill="#2a2a2a"><ellipse cx="17" cy="8" rx="3.3" ry="4"/><path d="M12 21 C12 16 14 15 17 13.5 C20 15 23.5 15 23.5 21 Z"/><ellipse cx="9" cy="6" rx="4.3" ry="5.3" stroke="#f0efee" stroke-width="0.8"/><path d="M1 21 C1 15 4.5 14.5 6.5 12 L11.5 12 C13.5 14.5 17 15 17 21 Z" stroke="#f0efee" stroke-width="0.8"/><rect x="6.8" y="9" width="4.4" height="4"/></g></svg>
<div class="t" id="t72" style="left:27.95px;top:128.22px;font-size:12.5px;letter-spacing:-0.120px;transform-origin:0 0;transform:scaleX(0.9069);-webkit-text-stroke:0.45px #2a2a2a;color:#2a2a2a;">CRM</div>
<div class="abs" style="left:1px;top:208px;width:80px;height:1px;background:#d0d0d0"></div>
<svg class="abs" style="left:28.5px;top:160px" width="22" height="20" viewBox="0 0 24 22"><g fill="#2a2a2a"><path d="M8.5 1.5 L15.5 1.5 L14 5.5 L10 5.5 Z"/><circle cx="12" cy="13.5" r="7.5"/></g><text x="12" y="18" font-size="12" font-weight="bold" fill="#f0efee" text-anchor="middle" font-family="Liberation Sans,sans-serif">$</text></svg>
<div class="t" id="t73" style="left:16.13px;top:184.22px;font-size:12.5px;letter-spacing:-0.120px;transform-origin:0 0;transform:scaleX(0.9467);-webkit-text-stroke:0.45px #2a2a2a;color:#2a2a2a;">Sprzedaz</div>
<div class="abs" style="left:1px;top:264px;width:80px;height:1px;background:#d0d0d0"></div>
<svg class="abs" style="left:28.5px;top:216px" width="22" height="20" viewBox="0 0 24 22"><g fill="none" stroke="#2a2a2a" stroke-width="2"><path d="M1 2.5 L5 2.5 L8 15 L20 15"/><path d="M6 5.5 L22 5.5 L20.5 12 L7.5 12 Z" stroke-width="1.6"/><path d="M11 5.5 L11.5 12 M16 5.5 L15.8 12 M6.8 8.7 L21.3 8.7" stroke-width="1.2"/></g><circle cx="9.5" cy="19" r="1.9" fill="#2a2a2a"/><circle cx="18.5" cy="19" r="1.9" fill="#2a2a2a"/></svg>
<div class="t" id="t74" style="left:5.31px;top:240.22px;font-size:12.5px;letter-spacing:-0.120px;transform-origin:0 0;transform:scaleX(0.9882);-webkit-text-stroke:0.45px #2a2a2a;color:#2a2a2a;">Zaopatrzenie</div>
<div class="abs" style="left:1px;top:320px;width:80px;height:1px;background:#d0d0d0"></div>
<svg class="abs" style="left:28.5px;top:272px" width="22" height="20" viewBox="0 0 24 22"><g fill="#2a2a2a"><rect x="8" y="3" width="15" height="12.5" rx="1"/><path d="M1.5 15.5 L1.5 10.5 L4.5 6.5 L8 6.5 L8 15.5 Z"/><rect x="1" y="14" width="22" height="3.2"/><circle cx="6.5" cy="17.5" r="3"/><circle cx="17.5" cy="17.5" r="3"/></g><circle cx="6.5" cy="17.5" r="1.2" fill="#f0efee"/><circle cx="17.5" cy="17.5" r="1.2" fill="#f0efee"/></svg>
<div class="t" id="t75" style="left:15.21px;top:296.22px;font-size:12.5px;letter-spacing:-0.120px;transform-origin:0 0;transform:scaleX(0.9836);-webkit-text-stroke:0.45px #2a2a2a;color:#2a2a2a;">Logistyka</div>
<div class="abs" style="left:1px;top:376px;width:80px;height:1px;background:#d0d0d0"></div>
<svg class="abs" style="left:28.5px;top:327px" width="27" height="23.5" viewBox="0 0 24 22"><g fill="#2a2a2a" stroke="#f0efee" stroke-width="0.9" stroke-linejoin="round"><path d="M12 0.5 L18 3.3 L18 9.5 L12 12.3 L6 9.5 L6 3.3 Z"/><path d="M6.5 9.5 L12.5 12.3 L12.5 18.8 L6.5 21.6 L0.5 18.8 L0.5 12.3 Z"/><path d="M17.5 9.5 L23.5 12.3 L23.5 18.8 L17.5 21.6 L11.5 18.8 L11.5 12.3 Z"/><path d="M6 3.3 L12 6 L18 3.3 M12 6 L12 12 M0.5 12.3 L6.5 15 L12.5 12.3 M6.5 15 L6.5 21.5 M11.5 12.3 L17.5 15 L23.5 12.3 M17.5 15 L17.5 21.5" fill="none"/></g></svg>
<div class="t" id="t76" style="left:13.71px;top:352.22px;font-size:12.5px;letter-spacing:-0.120px;transform-origin:0 0;transform:scaleX(0.9885);-webkit-text-stroke:0.45px #2a2a2a;color:#2a2a2a;">Produkcja</div>
<div class="abs" style="left:1px;top:432px;width:80px;height:1px;background:#d0d0d0"></div>
<svg class="abs" style="left:28.5px;top:384px" width="22" height="20" viewBox="0 0 24 22"><g fill="#2a2a2a"><path d="M2 19 L12 9 L15 12 L5 22 Z"/><path d="M21.8 5.5 A6 6 0 1 1 17 1.2 L14.5 5 L17 8.5 L20.5 8 Z"/></g></svg>
<div class="t" id="t77" style="left:23.23px;top:408.22px;font-size:12.5px;letter-spacing:-0.120px;transform-origin:0 0;transform:scaleX(0.9483);-webkit-text-stroke:0.45px #2a2a2a;color:#2a2a2a;">Serwis</div>
<div class="abs" style="left:1px;top:488px;width:80px;height:1px;background:#d0d0d0"></div>
<svg class="abs" style="left:28.5px;top:440px" width="22" height="20" viewBox="0 0 24 22"><g fill="#2a2a2a"><rect x="2" y="4" width="14" height="14" rx="1"/><rect x="4.5" y="1.5" width="2" height="4"/><rect x="8" y="1.5" width="2" height="4"/><rect x="11.5" y="1.5" width="2" height="4"/></g><circle cx="16.5" cy="15" r="6" fill="#f0efee" stroke="#2a2a2a" stroke-width="1.4"/><text x="16.5" y="19" font-size="10" font-weight="bold" fill="#2a2a2a" text-anchor="middle" font-family="Liberation Sans,sans-serif">$</text><g fill="#f0efee"><rect x="4" y="8" width="2" height="2"/><rect x="7.5" y="8" width="2" height="2"/><rect x="11" y="8" width="2" height="2"/><rect x="4" y="12" width="2" height="2"/><rect x="7.5" y="12" width="2" height="2"/></g></svg>
<div class="t" id="t78" style="left:15.20px;top:464.22px;font-size:12.5px;letter-spacing:-0.164px;-webkit-text-stroke:0.45px #2a2a2a;color:#2a2a2a;">Wynajem</div>
<div class="abs" style="left:1px;top:544px;width:80px;height:1px;background:#d0d0d0"></div>
<svg class="abs" style="left:27px;top:496px" width="25" height="21" viewBox="0 0 24 22"><g fill="none" stroke="#2a2a2a" stroke-width="2.3"><path d="M3 20.5 L10 8.5 L14 13 L21 2"/><path d="M1 9.5 L5 9.5 L9.5 15.5 L13 15.5 L22.5 9" stroke-width="1.9"/></g></svg>
<div class="t" id="t79" style="left:20.74px;top:520.22px;font-size:12.5px;letter-spacing:-0.120px;transform-origin:0 0;transform:scaleX(0.9143);-webkit-text-stroke:0.45px #2a2a2a;color:#2a2a2a;">Finanse</div>
<div class="abs" style="left:1px;top:600px;width:80px;height:1px;background:#d0d0d0"></div>
<svg class="abs" style="left:28.5px;top:552px" width="22" height="20" viewBox="0 0 24 22"><g><path d="M12 1.5 L22 6 L22 16.5 L12 21.5 L2 16.5 L2 6 Z" fill="none" stroke="#2a2a2a" stroke-width="1.8" stroke-linejoin="round"/><path d="M12 10.5 L22 6 L22 16.5 L12 21.5 Z" fill="#2a2a2a"/><path d="M2 6 L12 10.5" stroke="#2a2a2a" stroke-width="1.8"/></g></svg>
<div class="t" id="t80" style="left:19.05px;top:576.22px;font-size:12.5px;letter-spacing:0.037px;-webkit-text-stroke:0.45px #2a2a2a;color:#2a2a2a;">Produkt</div>
<div class="abs" style="left:1px;top:656px;width:80px;height:1px;background:#d0d0d0"></div>
<svg class="abs" style="left:28.5px;top:608px" width="22" height="20" viewBox="0 0 24 22"><g fill="#2a2a2a"><ellipse cx="10" cy="8.5" rx="9" ry="6.5"/><path d="M4 12 L2.5 18 L9 14 Z"/><path d="M20 9 C24 11 24 16 20 18 L22 21.5 L16.5 19 C13 19.5 11 18 10 16.5 C16 16 20 13 20 9 Z"/></g></svg>
<div class="t" id="t81" style="left:8.71px;top:632.22px;font-size:12.5px;letter-spacing:-0.120px;transform-origin:0 0;transform:scaleX(0.9858);-webkit-text-stroke:0.45px #2a2a2a;color:#2a2a2a;">Wspólpraca</div>
<div class="abs" style="left:1px;top:712px;width:80px;height:1px;background:#d0d0d0"></div>
<svg class="abs" style="left:28.5px;top:664px" width="22" height="20" viewBox="0 0 24 22"><g fill="#2a2a2a"><ellipse cx="12" cy="6.5" rx="5" ry="6"/><path d="M1 22 C1 16 6 15.5 9 13 L15 13 C18 15.5 23 16 23 22 Z"/><rect x="9" y="10" width="6" height="5"/></g></svg>
<div class="t" id="t82" style="left:32.86px;top:688.22px;font-size:12.5px;letter-spacing:-0.120px;transform-origin:0 0;transform:scaleX(0.8810);-webkit-text-stroke:0.45px #2a2a2a;color:#2a2a2a;">HR</div>
<div class="abs" style="left:1px;top:768px;width:80px;height:1px;background:#d0d0d0"></div>
<svg class="abs" style="left:28.5px;top:720px" width="22" height="20" viewBox="0 0 24 22"><g fill="none" stroke="#2a2a2a" stroke-width="1.7" stroke-linejoin="round"><rect x="2" y="10.5" width="4.5" height="10" fill="#2a2a2a"/><path d="M6.5 11.5 C10 9 11 6 11 2.5 C14 2 15.5 5 13.5 9.5 L20 9.5 C22 9.5 22 12 20.5 12.5 C22 13.5 21.5 15.5 20 15.7 C21 16.8 20.5 18.3 19 18.6 C19.8 19.8 19 21 17.5 21 L10 21 L6.5 19.5"/></g></svg>
<div class="t" id="t83" style="left:32.23px;top:744.22px;font-size:12.5px;letter-spacing:-0.120px;transform-origin:0 0;transform:scaleX(0.9476);-webkit-text-stroke:0.45px #2a2a2a;color:#2a2a2a;">QA</div>
<svg class="abs" style="left:28.5px;top:776px" width="22" height="20" viewBox="0 0 24 22"><g transform="translate(12 11.5)"><g fill="#2a2a2a"><circle r="7"/><rect x="-2.2" y="-10.3" width="4.4" height="20.6" rx="0.8"/><rect x="-2.2" y="-10.3" width="4.4" height="20.6" rx="0.8" transform="rotate(45)"/><rect x="-2.2" y="-10.3" width="4.4" height="20.6" rx="0.8" transform="rotate(90)"/><rect x="-2.2" y="-10.3" width="4.4" height="20.6" rx="0.8" transform="rotate(135)"/></g><circle r="3.2" fill="#f0efee"/></g></svg>
<div class="t" id="t84" style="left:22.90px;top:800.22px;font-size:12.5px;letter-spacing:0.042px;-webkit-text-stroke:0.45px #2a2a2a;color:#2a2a2a;">Admin</div>
<div id="top" class="abs">
<div class="abs" style="left:31px;top:12px;width:17px;height:2px;background:#fff"></div>
<div class="abs" style="left:31px;top:19px;width:17px;height:2px;background:#fff"></div>
<div class="abs" style="left:31px;top:26px;width:17px;height:2px;background:#fff"></div>
<div class="t" id="logo" style="left:65.5px;top:6px;font-size:28.5px;font-weight:bold;color:#fff;-webkit-text-stroke:0.8px #fff;letter-spacing:1px;transform-origin:0 0;transform:scaleX(1.59)">RAMBASE</div>
<div class="abs" style="left:114px;top:22px;width:11px;height:5px;background:#f58220;transform:skewX(35deg)"></div>
<div class="abs" style="left:222px;top:22px;width:11px;height:5px;background:#f58220;transform:skewX(35deg)"></div>
<div class="t" style="left:307px;top:7px;width:11px;height:10px;border:1.5px solid #fff;border-radius:50%;font-size:7px;font-weight:bold;color:#fff;text-align:center;line-height:7px">R</div>
<div class="t" id="t85" style="left:343.59px;top:14.87px;font-size:13.5px;letter-spacing:-0.120px;transform-origin:0 0;transform:scaleX(0.8243);color:#fff;">JHCDEVSYS</div>
<svg class="abs" style="left:529px;top:15px" width="13" height="10" viewBox="0 0 13 10"><path d="M2 2.5 L6.5 7 L11 2.5" fill="none" stroke="#fff" stroke-width="2.2"/></svg>
<div class="abs" style="left:549px;top:9px;width:77px;height:24px;background:#fff"></div>
<div class="t" id="t86" style="left:557.53px;top:14.87px;font-size:13.5px;letter-spacing:-0.120px;transform-origin:0 0;transform:scaleX(0.9308);color:#333;">TEM-NO</div>
<svg class="abs" style="left:610px;top:16px" width="13" height="10" viewBox="0 0 13 10"><path d="M2 2.5 L6.5 7 L11 2.5" fill="none" stroke="#222" stroke-width="2"/></svg>
<div class="abs" style="left:631px;top:9px;width:146px;height:24px;background:#fff"></div>
<div class="t" id="t87" style="left:639.54px;top:14.87px;font-size:13.5px;letter-spacing:-0.120px;transform-origin:0 0;transform:scaleX(0.9142);color:#333;">SUP/100051</div>
<div class="abs" style="left:782px;top:9px;width:20px;height:24px;background:#ddd;border-radius:3px"></div>
<svg class="abs" style="left:788px;top:16px" width="8" height="9" viewBox="0 0 8 9"><path d="M5.5 1.5 L2.5 4.5 L5.5 7.5" fill="none" stroke="#333" stroke-width="1.3"/></svg>
<div class="abs" style="left:1640px;top:0px;width:40px;height:40px;background:#ff9a08"></div>
<div class="abs" style="left:1640px;top:0px;width:1px;height:40px;background:#8a8682"></div>
<div class="abs" style="left:1720px;top:0px;width:1px;height:40px;background:#8a8682"></div>
<div class="abs" style="left:1760px;top:0px;width:1px;height:40px;background:#8a8682"></div>
<div class="abs" style="left:1800px;top:0px;width:1px;height:40px;background:#8a8682"></div>
<div class="abs" style="left:1840px;top:0px;width:1px;height:40px;background:#8a8682"></div>
<div class="abs" style="left:1880px;top:0px;width:1px;height:40px;background:#8a8682"></div>
<svg class="abs" style="left:1654px;top:12.5px" width="13.6" height="12.3" viewBox="0 0 15 14"><path d="M7.5 1 L14 13 L1 13 Z" fill="#fff" stroke="#fff" stroke-width="2" stroke-linejoin="round"/><rect x="6.6" y="4.5" width="1.8" height="4.5" fill="#ff9a08"/><rect x="6.6" y="10" width="1.8" height="1.8" fill="#ff9a08"/></svg>
<div class="t" style="left:1697.6px;top:13.2px;font-size:13px;font-weight:bold;color:#fff;-webkit-text-stroke:0.5px #fff">?</div>
<svg class="abs" style="left:1734.5px;top:12.5px" width="13" height="12.5" viewBox="0 0 15 14"><path d="M7.5 0 L9.7 4.8 L15 5.4 L11.1 9 L12.1 14 L7.5 11.5 L2.9 14 L3.9 9 L0 5.4 L5.3 4.8 Z" fill="#fff"/></svg>
<svg class="abs" style="left:1775.5px;top:13.5px" width="11.7" height="11.7" viewBox="0 0 13 13"><g transform="rotate(-42 6.5 6.5)" fill="none" stroke="#fff"><rect x="3.6" y="-0.8" width="5.8" height="14.6" rx="2.9" stroke-width="1.3"/><path d="M5.6 2.5 L5.6 10 M7.4 2.5 L7.4 10" stroke-width="1"/></g></svg>
<svg class="abs" style="left:1814.5px;top:13.5px" width="13.5" height="12" viewBox="0 0 14 12"><rect x="0" y="0" width="3" height="2.6" fill="#fff"/><rect x="4" y="0" width="10" height="2.6" fill="#fff"/><rect x="0" y="4.7" width="3" height="2.6" fill="#fff"/><rect x="4" y="4.7" width="10" height="2.6" fill="#fff"/><rect x="0" y="9.4" width="3" height="2.6" fill="#fff"/><rect x="4" y="9.4" width="10" height="2.6" fill="#fff"/></svg>
<svg class="abs" style="left:1854px;top:14.5px" width="14" height="10.5" viewBox="0 0 14 10.5"><rect x="0" y="0" width="14" height="10.5" rx="1" fill="#fff"/><path d="M0.5 1.8 L7 6.6 L13.5 1.8" fill="none" stroke="#2d2d2d" stroke-width="1.1"/></svg>
<svg class="abs" style="left:1894px;top:12.5px" width="14" height="12.5" viewBox="0 0 14 13"><ellipse cx="7" cy="3.8" rx="3.3" ry="3.8" fill="#fff"/><path d="M0.5 13 C0.5 9.5 4 9.5 5.2 8 L8.8 8 C10 9.5 13.5 9.5 13.5 13 Z" fill="#fff"/><rect x="5.2" y="6" width="3.6" height="3" fill="#fff"/></svg>
</div>
<div class="abs" style="left:1679px;top:39px;width:223px;height:61px;background:#ff9a08"></div>
<svg class="abs" style="left:1694px;top:29px" width="18" height="10" viewBox="0 0 18 10"><path d="M0 10 L9 0 L18 10 Z" fill="#ff9a08"/></svg>
<div class="t" id="t88" style="left:1688.82px;top:46.07px;font-size:13.5px;letter-spacing:-0.120px;transform-origin:0 0;transform:scaleX(0.9600);color:#fff;">This application has some new</div>
<div class="t" id="t89" style="left:1688.82px;top:62.97px;font-size:13.5px;letter-spacing:-0.120px;transform-origin:0 0;transform:scaleX(0.9631);color:#fff;">features. Click here if you want a</div>
<div class="t" id="t90" style="left:1688.80px;top:79.97px;font-size:13.5px;letter-spacing:-0.126px;color:#fff;">tour around this application</div>
<svg class="abs" style="left:1879.5px;top:43.5px" width="10.5" height="10.5" viewBox="0 0 10 10"><path d="M1.3 1.3 L8.7 8.7 M8.7 1.3 L1.3 8.7" stroke="#fff" stroke-width="2.6"/></svg>
</body></html>
